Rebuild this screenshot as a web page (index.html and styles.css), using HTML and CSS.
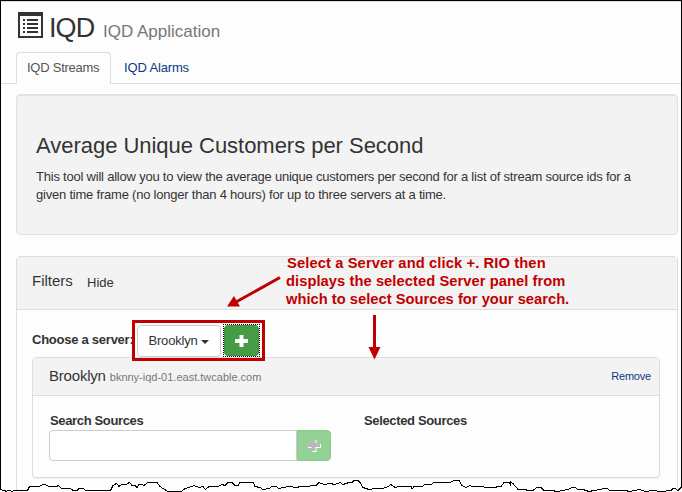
FILE: index.html
```html
<!DOCTYPE html>
<html lang="en">
<head>
<meta charset="utf-8">
<title>IQD Application</title>
<link rel="stylesheet" href="styles.css">
</head>
<body>
<div class="page">
  <header class="brand">
    <svg class="brand-icon" width="25" height="26" viewBox="0 0 25 26"><path fill="#333" fill-rule="evenodd" d="M0 0h25v26H0zM2 4v20h21V4z"/><path fill="#333" d="M5 7h2v2H5zm4 0h11v2H9zM5 11h2v2H5zm4 0h11v2H9zM5 15h2v2H5zm4 0h11v2H9zM5 19h2v2H5zm4 0h11v2H9z"/></svg>
    <h1>IQD</h1><span class="subtitle">IQD Application</span>
  </header>
  <nav class="tabs"><a class="tab active">IQD Streams</a><a class="tab">IQD Alarms</a></nav>
  <section class="intro">
    <h2>Average Unique Customers per Second</h2>
    <p>This tool will allow you to view the average unique customers per second for a list of stream source ids for a<br>given time frame (no longer than 4 hours) for up to three servers at a time.</p>
  </section>
  <section class="filters">
    <div class="filters-head"><span class="filters-title">Filters</span><a class="hide">Hide</a></div>
    <div class="filters-body">
      <div class="chooser">
        <label>Choose a server:</label>
        <div class="picker">
          <button class="select">Brooklyn<i class="caret"></i></button>
          <span class="focus"><button class="add" aria-label="Add"><svg width="13" height="12" viewBox="0 0 13 12"><path fill="#fff" d="M4.500 0h4v4H13v4H8.500v4h-4V8H0V4h4.500z"/></svg></button></span>
        </div>
      </div>
      <div class="server">
        <div class="server-head"><span><span class="server-name">Brooklyn</span><small>bknny-iqd-01.east.twcable.com</small></span><a class="remove">Remove</a></div>
        <div class="server-body">
          <div class="column">
            <b class="column-label">Search Sources</b>
            <div class="search"><input type="text" aria-label="Search Sources"><button class="add-source" aria-label="Add"><svg width="14" height="13" viewBox="0 0 14 13"><path fill="#fff" d="M5.500 1h4v4H14v4H9.500v4h-4V9H1V5h4.500z"/><path fill="#b9b9b9" d="M4.500 0h4v4H13v4H8.500v4h-4V8H0V4h4.500z"/></svg></button></div>
          </div>
          <div class="column"><b class="column-label">Selected Sources</b></div>
        </div>
      </div>
    </div>
  </section>
</div>
<div class="note"><span class="n1">Select a Server and click +. RIO then</span><br><span class="n2">displays the selected Server panel from</span><br><span class="n3">which to select Sources for your search.</span></div>
<svg class="overlay" width="682" height="492" viewBox="0 0 682 492">
  <g stroke="#c00000" stroke-width="3" fill="none"><path d="M280 277.500L236 302M374.500 315v34"/><path d="M133.500 321.500h130v38h-130z"/></g>
  <path fill="#c00000" d="M227 306.500l7-10.500 6 10.500zM368.500 347h12l-6 12.500z"/>
  <path fill="#fdfdfd" d="M0 489L2 490 5 491 8 490 11 491 17 490H27L30 486.500H39L42 484.500 46 485 50 487H56L58 485.500 62 488 70 489 76 491 79 489 83 488.500 87 491 91 490 110 490.500 113 485 117 483.500 119 486 124 484.500 131 484 136 487 141 486 146 483H157L160 486 165 490 168 491H181L186 488 195 486 204 489 209 486H219L225 485 228 482.500 232 482 235 485H238L240 482.500H253L255 486 262 489.500 272 487H310L319 483H348L354 481 360 483 363 487 370 489.500 388 487H420L434 483 450 482 459 480 461 485 465 487H483L490 488 498 487 504 483H510L517 489H524L529 491 541 488 546 491H560L573 488 577 490 608 488 611 490H672L679 489V492H0z"/>
  <path class="tear" d="M.5 489L2.500 490.500H5L6 491.500 8 490.500H10.500L11.500 491.500 14 490.500H27.500L29.500 486.500H39.500L42.500 484.500H45.500L48.500 486.500H56.500L58.500 485.500 61.500 488.500H70.500L73 490.500H77L79 488.500H83.500L86 491 91 490.500H110.500L113 485.500 116.500 483.500 119 486.500 121.500 484.500H126L129.500 482.500 132 485.500H135L137 487.500 139 484.500H142L144 485.500 147.500 482.500H157L160 486.500 163 488.500 168 491.500H181.500L185 488.500 189 487.500 194 485.500 199 487.500 203 486.500 205.500 489.500 209 486.500H218L222 484.500 225 485.500 228 482.500H232L235 485.500H238L240 482.500H253.500L255 486.500 260 487.500 263 489.500 269 488.500 272 486.500H276L279 488.500 288 486.500 297 487.500 300 486.500H309L311 485.500H316L319 482.500 324 484.500 330 483.500 335 484.500 340 482.500 343 484.500 349 482.500H352L354 480.500H358L360 482.500 363 487.500 369 489.500 375 488.500H383L388 486.500 391 484.500 395 487.500 399 486.500H411L412 489 414 486.500H422L425 484.500H431L434 482.500H450L454 480.500H459L462 485.500 466 487.500 470 485.500 472 486.500H483L485 487.500H495L498 486.500H501L504 482.500H509L510 484V481.500L513 483.500 518 489.500H525L528 490.500H533L537 487.500H541L544 490.500H552L557 491.500 568 489.500 572 487.500H575L578 489.500H583L589 491.500 594 490.500 600 489.500 604 488.500H607L610 490.500H625L630 491.500 639 489.500 646 491.500 653 490.500 661 491.500 671 490.500 673 488.500H675L678 490.500 681.500 487"/>
  <path class="frame" d="M.5 490V.5H681.500V488"/>
</svg>
</body>
</html>
```
FILE: styles.css
```css
* { box-sizing: border-box; }
body { margin: 0; width: 682px; height: 492px; overflow: hidden; position: relative; background: #fdfdfd; color: #333; font: 13px/18px "Liberation Sans", Arial, sans-serif; }
h1, h2, p { margin: 0; font-weight: 400; }
button, input { font: inherit; margin: 0; padding: 0; }
.page { border-top: 2px solid #ddd; height: 492px; overflow: hidden; }
.brand { height: 50px; padding: 10px 0 0 18px; display: flex; align-items: flex-start; }
.brand-icon { flex: none; margin-right: 6px; }
h1 { font-size: 27px; line-height: 32px; width: 54px; letter-spacing: -.9px; white-space: nowrap; }
.subtitle { color: #777; font-size: 17px; line-height: 39px; white-space: nowrap; }
.tabs { display: flex; height: 32px; padding-left: 16px; border-bottom: 1px solid #ddd; }
.tab { height: 32px; padding: 7px 11px 0; color: #0b3a82; letter-spacing: -.15px; white-space: nowrap; }
.tab + .tab { padding-left: 13px; }
.active { width: 95px; padding: 6px 10px 0; color: #555; letter-spacing: -.25px; border: 1px solid #ddd; border-bottom: 0; border-radius: 4px 4px 0 0; background: #fdfdfd; }
.intro { height: 141px; margin: 10px 4px 0 16px; padding: 36px 19px 0; background: #f3f3f3; border: 1px solid #e1e1e1; border-radius: 4px; box-shadow: inset 0 1px 1px #e1e1e1; white-space: nowrap; }
.intro p { letter-spacing: -.215px; }
h2 { font-size: 22px; line-height: 30px; margin-bottom: 7px; letter-spacing: -.03px; }
.filters { height: 260px; margin: 21px 4px 0 16px; border: 1px solid #ddd; border-radius: 4px; }
.filters-head { height: 53px; padding: 15px; background: #f3f3f3; border-bottom: 1px solid #ddd; display: flex; align-items: baseline; }
.filters-title { font-size: 15px; width: 55px; }
.hide { position: relative; top: 1px; }
.filters-body { padding: 10px 17px 0 15px; }
.chooser { height: 37px; display: flex; align-items: center; white-space: nowrap; }
label { font-weight: 700; width: 105px; letter-spacing: -.25px; padding-top: 2px; }
.picker { display: flex; align-items: center; gap: 2px; margin-top: 4px; }
.select { width: 84px; height: 32px; border: 1px solid #ccc; border-radius: 4px; background: #fff; color: #333; letter-spacing: -.2px; display: flex; align-items: center; justify-content: center; gap: 4px; }
.caret { border: 4px solid transparent; border-top-color: #333; border-bottom: 0; margin-top: 3px; }
.focus { border: 1px dotted #000; display: flex; }
.add { width: 35px; height: 31px; border: 1px solid #3d9140; border-radius: 4px; background: #449d44; display: grid; place-items: center; }
.server { height: 121px; border: 1px solid #ddd; border-radius: 4px; box-shadow: 0 1px 1px #eee; }
.server-head { height: 38px; padding: 9px 8px 0 16px; background: #f3f3f3; border-bottom: 1px solid #ddd; display: flex; justify-content: space-between; align-items: baseline; }
.server-name { font-size: 15px; letter-spacing: -.2px; margin-right: 4px; }
small { font-size: 11px; color: #777; }
.remove { font-size: 11px; letter-spacing: -.2px; color: #0b3a82; position: relative; top: -1px; }
.server-body { display: grid; grid-template-columns: 314px 1fr; padding: 16px 0 0 16px; }
.column { display: flex; flex-direction: column; align-items: flex-start; }
.column-label { letter-spacing: -.35px; padding-left: 1px; }
.search { display: flex; width: 282px; height: 31px; }
input { width: 248px; border: 1px solid #ccc; border-radius: 4px 0 0 4px; background: #fff; }
.add-source { width: 34px; border: 1px solid #8bca8d; border-radius: 0 4px 4px 0; background: #94d194; display: grid; place-items: center; }
.note { position: absolute; left: 286px; top: 254px; color: #c00000; font-weight: 700; font-size: 14.7px; white-space: nowrap; }
.n1 { letter-spacing: .12px; margin-left: 1px; }
.n2 { letter-spacing: .07px; }
.n3 { letter-spacing: .02px; }
.overlay { position: absolute; left: 0; top: 0; pointer-events: none; }
.tear, .frame { fill: none; stroke: #000; stroke-width: 1; shape-rendering: crispEdges; }
```
